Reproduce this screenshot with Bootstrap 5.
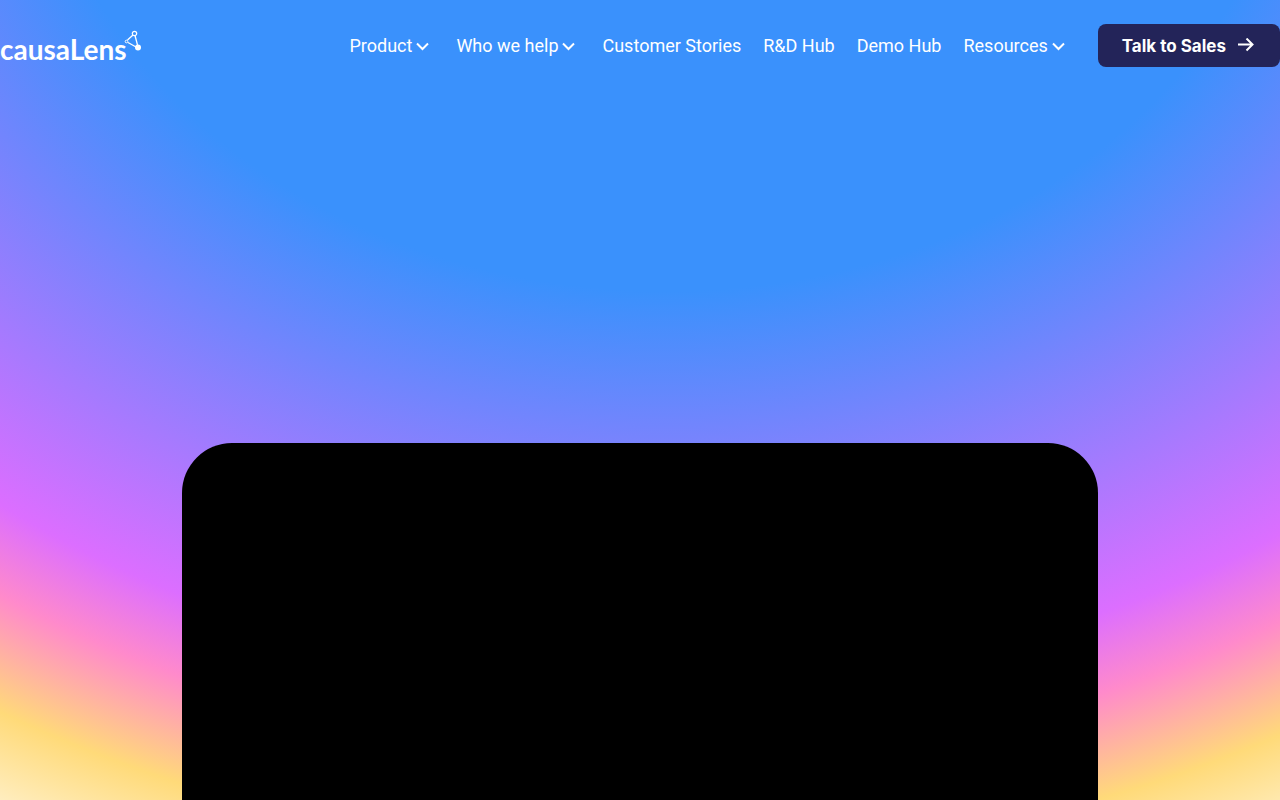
<!DOCTYPE html>
<html lang="en">
<head>
<meta charset="utf-8">
<meta name="viewport" content="width=device-width, initial-scale=1">
<title>causaLens</title>
<link href="https://cdn.jsdelivr.net/npm/bootstrap@5.3.0/dist/css/bootstrap.min.css" rel="stylesheet">
<style>
body { font-family: Inter, "Liberation Sans", sans-serif; }
.hero {
  background: radial-gradient(ellipse 120% 157% at 52% -28%, #3a91fc 41%, #dc6eff 72.4%, #ff8acb 78.3%, #ffda79 86.2%, #fff 98%);
}
.brand-link { padding-top: 6px; }
.brand-name { font: 700 28px/32px Lato, sans-serif; }
.brand-mark { margin: 0 0 16px -3px; }
.site-links { font: 400 18px/24px Roboto, sans-serif; gap: 22px; margin-right: 33px; }
.has-menu { margin-right: 5px; }
.has-menu svg { margin: 2px 0 0 4px; }
.btn-sales {
  --bs-btn-bg: #232459; --bs-btn-hover-bg: #31327a; --bs-btn-active-bg: #191a45;
  --bs-btn-color: #fff; --bs-btn-hover-color: #fff; --bs-btn-active-color: #fff;
  --bs-btn-border-width: 0; --bs-btn-border-radius: 8px;
  font: 700 17px/24px Inter, sans-serif;
  padding: 10px 24px; height: 43px; gap: 10px;
}
.video-frame { width: 916px; max-width: 92%; border-radius: 50px 50px 0 0; margin-top: 376px; }
</style>
</head>
<body>
<div class="hero min-vh-100 d-flex flex-column">
  <header class="navbar p-0 pt-4 flex-nowrap">
    <a href="#" class="brand-link d-flex align-items-center text-white text-decoration-none" aria-label="causaLens home">
      <span class="brand-name">causaLens</span>
      <svg class="brand-mark" width="18" height="21" viewBox="0 0 18 21" fill="none" stroke="#fff" aria-hidden="true">
        <path d="M9 5 3.500 10M4 12.500 12 17M11 5.500 13.500 15" stroke-width="1.300"/>
        <circle cx="10.500" cy="3.500" r="2.200" stroke-width="1.200"/><circle cx="2.500" cy="11.500" r="1.300"/>
        <circle cx="14" cy="17.500" r="3" fill="#fff" stroke="none"/>
      </svg>
    </a>
    <div class="d-flex align-items-center">
      <nav class="site-links d-flex align-items-center text-nowrap" aria-label="Main">
        <a href="#" class="has-menu d-flex align-items-center text-white text-decoration-none">Product<svg width="13" height="9" viewBox="0 0 13 9" fill="none" stroke="#fff" stroke-width="2" aria-hidden="true"><path d="m1 1.500 5.500 5.500L12 1.500"/></svg></a>
        <a href="#" class="has-menu d-flex align-items-center text-white text-decoration-none">Who we help<svg width="13" height="9" viewBox="0 0 13 9" fill="none" stroke="#fff" stroke-width="2" aria-hidden="true"><path d="m1 1.500 5.500 5.500L12 1.500"/></svg></a>
        <a href="#" class="text-white text-decoration-none">Customer Stories</a>
        <a href="#" class="text-white text-decoration-none">R&amp;D Hub</a>
        <a href="#" class="text-white text-decoration-none">Demo Hub</a>
        <a href="#" class="d-flex align-items-center text-white text-decoration-none has-menu me-0">Resources<svg width="13" height="9" viewBox="0 0 13 9" fill="none" stroke="#fff" stroke-width="2" aria-hidden="true"><path d="m1 1.500 5.500 5.500L12 1.500"/></svg></a>
      </nav>
      <button type="button" class="btn btn-sales d-flex align-items-center text-nowrap">Talk to Sales
        <svg width="20" height="16" viewBox="0 0 20 16" fill="none" stroke="#fff" stroke-width="2" aria-hidden="true"><path d="M2 6.500h14M10.500 .5l6 6-6 6"/></svg>
      </button>
    </div>
  </header>
  <main class="d-flex flex-column flex-grow-1">
    <section class="video-frame bg-black mx-auto flex-grow-1" aria-label="Product video"></section>
  </main>
</div>
<script src="https://cdn.jsdelivr.net/npm/bootstrap@5.3.0/dist/js/bootstrap.bundle.min.js"></script>
</body>
</html>
